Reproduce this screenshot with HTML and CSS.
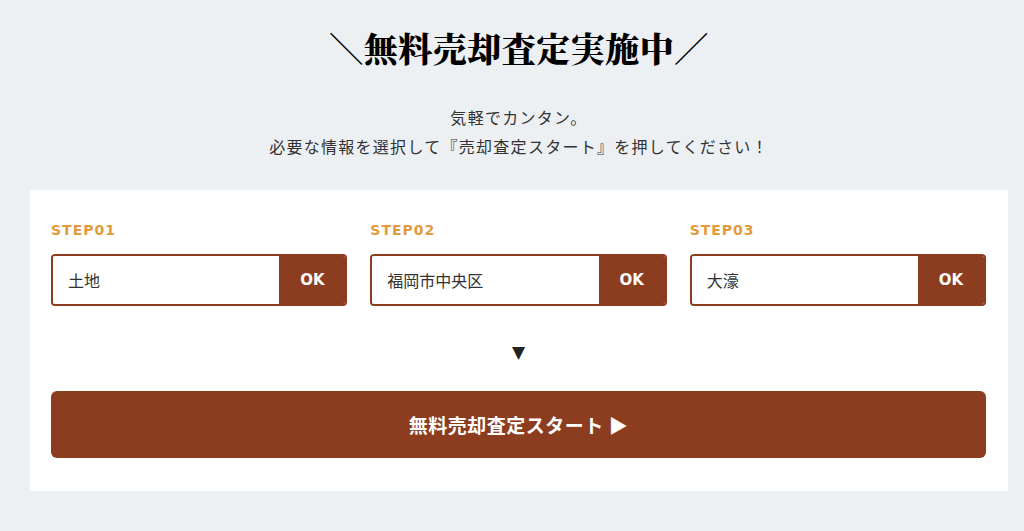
FILE: index.html
```html
<!DOCTYPE html>
<html lang="ja">
<head>
<meta charset="utf-8">
<link rel="stylesheet" href="styles.css">
</head>
<body>
<section class="assess">
  <h2 class="title">＼無料売却査定実施中／</h2>
  <p class="lead">気軽でカンタン。<br>必要な情報を選択して『売却査定スタート』を押してください！</p>
  <div class="panel">
    <div class="steps">
      <div class="step">
        <div class="step-label">STEP01</div>
        <div class="field"><span class="value">土地</span><span class="ok">OK</span></div>
      </div>
      <div class="step">
        <div class="step-label">STEP02</div>
        <div class="field"><span class="value">福岡市中央区</span><span class="ok">OK</span></div>
      </div>
      <div class="step">
        <div class="step-label">STEP03</div>
        <div class="field"><span class="value">大濠</span><span class="ok">OK</span></div>
      </div>
    </div>
    <div class="arrow">▼</div>
    <button class="start">無料売却査定スタート ▶</button>
  </div>
</section>
</body>
</html>
```

FILE: styles.css
```css
html, body {
  margin: 0;
  padding: 0;
}
body {
  background: #ecf0f3;
  font-family: "Noto Sans CJK JP", sans-serif;
  color: #333;
  width: 1024px;
  height: 531px;
  overflow: hidden;
}
.assess {
  padding: 26px 16px 0 30px;
}
.title {
  margin: 0;
  text-align: center;
  font-family: "Noto Serif CJK JP", "Noto Sans CJK JP", serif;
  font-weight: 900;
  font-size: 34px;
  line-height: 44px;
  letter-spacing: 0.5px;
  color: #000;
}
.lead {
  margin: 33px 0 0;
  text-align: center;
  font-size: 16px;
  line-height: 29px;
  letter-spacing: 0.08em;
  color: #333;
}
.panel {
  margin-top: 29px;
  background: #fff;
  width: 978px;
  box-sizing: border-box;
  padding: 32px 22px 33px 21px;
}
.steps {
  display: flex;
  gap: 23px;
}
.step {
  flex: 1;
}
.step-label {
  font-family: "DejaVu Sans", Verdana, sans-serif;
  font-weight: bold;
  font-size: 14px;
  line-height: 16px;
  letter-spacing: 1px;
  color: #e39a3b;
  margin-bottom: 16px;
}
.field {
  display: flex;
  height: 52px;
  box-sizing: border-box;
  border: 2px solid #8c3d20;
  border-radius: 4px;
  overflow: hidden;
}
.value {
  flex: 1;
  display: flex;
  align-items: center;
  padding-left: 15px;
  font-size: 16px;
  color: #333;
  background: #fff;
}
.ok {
  width: 66px;
  display: flex;
  align-items: center;
  justify-content: center;
  background: #8c3d20;
  color: #fff;
  font-family: "DejaVu Sans", Verdana, sans-serif;
  font-weight: bold;
  font-size: 15px;
}
.arrow {
  text-align: center;
  font-size: 17px;
  line-height: 20px;
  margin: 36px 0 29px;
  color: #222;
  font-family: "DejaVu Sans", sans-serif;
}
.start {
  display: block;
  width: 100%;
  height: 67px;
  border: none;
  border-radius: 6px;
  background: #8c3d20;
  color: #fff;
  font-family: "Noto Sans CJK JP", sans-serif;
  font-weight: bold;
  font-size: 19px;
  letter-spacing: 0.5px;
  cursor: pointer;
}
```
